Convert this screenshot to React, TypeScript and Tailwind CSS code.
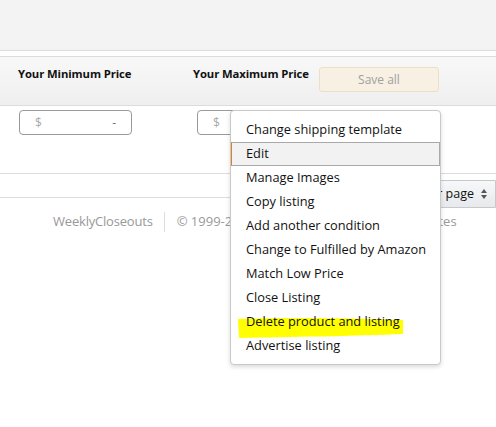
const menuItems = [
  "Change shipping template",
  "Edit",
  "Manage Images",
  "Copy listing",
  "Add another condition",
  "Change to Fulfilled by Amazon",
  "Match Low Price",
  "Close Listing",
  "Delete product and listing",
  "Advertise listing",
]

function ActionMenu() {
  return (
    <div className="absolute left-[230px] top-[110px] w-[211px] rounded-[4px] border border-[#c9c9c9] bg-white pb-[6px] pt-[7px] shadow-[0_2px_4px_rgba(0,0,0,0.15)]">
      {menuItems.map((item) => {
        const active = item === "Edit"
        const marked = item === "Delete product and listing"
        return (
          <div
            key={item}
            className={
              active
                ? "relative flex h-[24px] items-center border border-[#a9a9a9] border-l-[#d9822b] bg-[#f2f2f2] pl-[14px] text-[12.8px] text-[#111]"
                : "relative flex h-[24px] items-center pl-[15px] text-[12.8px] text-[#111]"
            }
          >
            {marked && (
              <svg className="absolute left-[6px] top-0 overflow-visible" width="168" height="30" viewBox="0 0 168 30">
                <path d="M1 9 C 40 7, 120 8, 166 10 L 166 24 C 120 26, 50 27, 2 28 Z" fill="#ffff00" />
              </svg>
            )}
            <span className="relative">{item}</span>
          </div>
        )
      })}
    </div>
  )
}

export default function App() {
  return (
    <div className="relative h-[427px] w-[496px] overflow-hidden bg-white font-['Open_Sans',sans-serif]">
      <div className="h-[51px] border-b border-[#dcdcdc] bg-[#f3f3f3]" />
      <div className="h-[6px] border-b border-[#dcdcdc]" />
      <div className="flex h-[49px] items-start border-b border-[#dcdcdc] bg-gradient-to-b from-[#f8f8f8] to-[#efefef]">
        <div className="w-[193px] pl-[18px] pt-[9px] text-[11.3px] font-bold tracking-[-0.1px] text-[#111]">Your Minimum Price</div>
        <div className="w-[126px] pt-[9px] text-[11.3px] font-bold tracking-[-0.1px] text-[#111]">Your Maximum Price</div>
        <button className="mt-[10px] h-[25px] w-[120px] rounded-[3px] border border-[#ebdfc8] bg-[#f7f0e3] text-[12px] text-[#a0a0a0]">
          Save all
        </button>
      </div>
      <div className="flex h-[68px] items-start gap-[65px] border-b border-[#dcdcdc] pl-[19px] pt-[4px]">
        <div className="flex h-[25px] w-[113px] items-center justify-between rounded-[4px] border border-[#999] px-[15px] text-[12px] text-[#aaa]">
          <span>$</span>
          <span className="text-[#777]">-</span>
        </div>
        <div className="flex h-[25px] w-[113px] items-center rounded-[4px] border border-[#999] px-[15px] text-[12px] text-[#aaa]">
          <span>$</span>
        </div>
      </div>
      <div className="flex h-[24px] justify-end border-b border-[#dcdcdc]">
        <div className="relative z-0 mt-[6px] flex h-[28px] w-[160px] items-center justify-end gap-[7px] rounded-l-[3px] border border-[#c8c8c8] bg-gradient-to-b from-[#f7f8fa] to-[#e7e9ec] pr-[8px] text-[12.5px] text-[#111]">
          <span>Results per page</span>
          <svg width="6" height="10" viewBox="0 0 6 10">
            <path d="M3 0 L6 4 L0 4 Z M3 10 L6 6 L0 6 Z" fill="#555" />
          </svg>
        </div>
      </div>
      <div className="mt-[14px] flex items-center text-[13px] text-[#999]">
        <span className="pl-[53px] pr-[11px] tracking-[-0.2px]">WeeklyCloseouts</span>
        <span className="h-[20px] border-l border-[#ddd]" />
        <span className="pl-[12px]">© 1999-2018, Amazon.com, Inc. or its affiliates</span>
      </div>
      <ActionMenu />
    </div>
  )
}
